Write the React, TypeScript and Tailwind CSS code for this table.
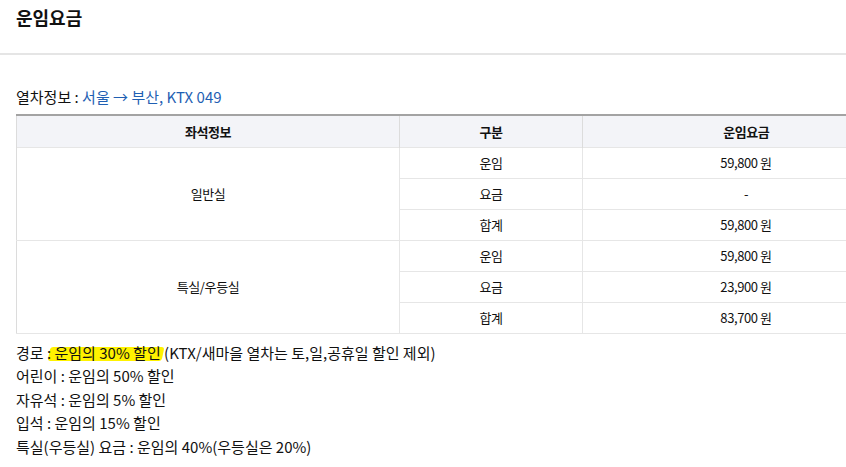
const font = { fontFamily: '"Noto Sans CJK KR", "Noto Sans", sans-serif' }

interface FareRow {
  label: string
  value: string
}

const groups: { seat: string; rows: FareRow[] }[] = [
  {
    seat: '일반실',
    rows: [
      { label: '운임', value: '59,800 원' },
      { label: '요금', value: '-' },
      { label: '합계', value: '59,800 원' },
    ],
  },
  {
    seat: '특실/우등실',
    rows: [
      { label: '운임', value: '59,800 원' },
      { label: '요금', value: '23,900 원' },
      { label: '합계', value: '83,700 원' },
    ],
  },
]

const notes = [
  { head: '어린이', body: '운임의 50% 할인' },
  { head: '자유석', body: '운임의 5% 할인' },
  { head: '입석', body: '운임의 15% 할인' },
  { head: '특실(우등실) 요금', body: '운임의 40%(우등실은 20%)' },
]

export default function App() {
  return (
    <div className="w-[846px] h-[467px] overflow-hidden bg-white text-[#111]" style={font}>
      <div className="h-[55px] border-b-2 border-[#e5e5e5]">
        <h1 className="pl-[16px] pt-[3px] text-[18px] font-bold leading-[28px]">운임요금</h1>
      </div>

      <div className="pl-[16px] pt-[30px]">
        <p className="text-[15px] leading-[24px]">
          열차정보 : <span className="text-[#1f5fb3]">서울 → 부산, KTX 049</span>
        </p>

        <table className="mt-[5px] w-[894px] border-collapse text-[13px] tracking-[-0.4px]">
          <thead>
            <tr className="h-[32px] border-t-2 border-[#a3a3a3] bg-[#f3f4f8]">
              <th className="w-[383px] border-l border-[#dcdcdc] font-bold">좌석정보</th>
              <th className="w-[183px] border-l border-[#dcdcdc] font-bold">구분</th>
              <th className="border-l border-[#dcdcdc] font-bold">운임요금</th>
            </tr>
          </thead>
          <tbody>
            {groups.map((g) =>
              g.rows.map((r, i) => (
                <tr key={g.seat + r.label} className="h-[31px]">
                  {i === 0 && (
                    <td
                      rowSpan={3}
                      className="border border-[#e6e6e6] border-l-[#dcdcdc] text-center"
                    >
                      {g.seat}
                    </td>
                  )}
                  <td className="border border-[#e6e6e6] border-l-[#dcdcdc] text-center">{r.label}</td>
                  <td className="border border-[#e6e6e6] border-l-[#dcdcdc] text-center">{r.value}</td>
                </tr>
              ))
            )}
          </tbody>
        </table>

        <div className="mt-[7px] text-[15px] leading-[23.5px]">
          <p>
            경로{' '}
            <span className="relative">
              <span className="absolute left-[2px] right-[1px] top-[5px] bottom-[2px] -skew-x-12 rounded-[3px] bg-[#fff200]" />
              <span className="relative">: 운임의 30% 할인 </span>
            </span>
            (KTX/새마을 열차는 토,일,공휴일 할인 제외)
          </p>
          {notes.map((n) => (
            <p key={n.head}>
              {n.head} : {n.body}
            </p>
          ))}
        </div>
      </div>
    </div>
  )
}
